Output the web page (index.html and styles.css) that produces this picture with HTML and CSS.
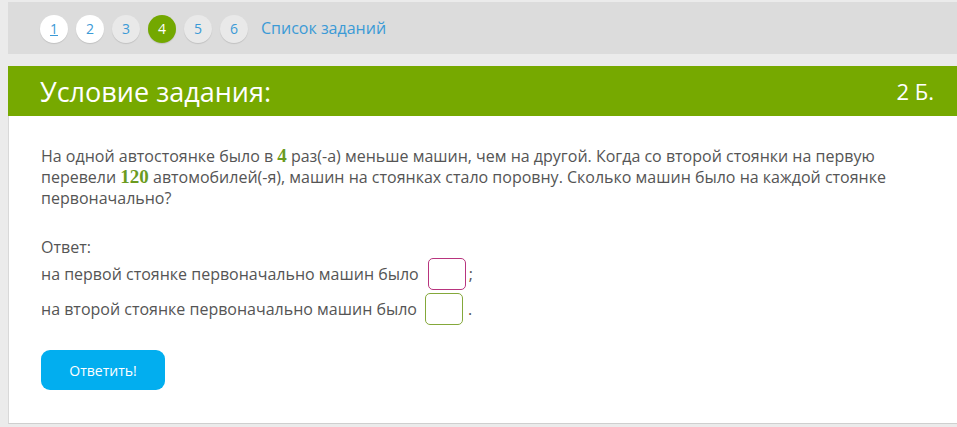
FILE: index.html
```html
<!DOCTYPE html>
<html lang="ru">
<head>
<meta charset="utf-8">
<link rel="stylesheet" href="styles.css">
</head>
<body>
<div class="page">
  <nav class="nav">
    <a class="num num-white num-current">1</a>
    <a class="num num-white">2</a>
    <a class="num">3</a>
    <a class="num num-active">4</a>
    <a class="num">5</a>
    <a class="num">6</a>
    <a class="list-link">Список заданий</a>
  </nav>
  <section class="card">
    <header class="card-head">
      <h1 class="title">Условие задания:</h1>
      <span class="points">2 Б.</span>
    </header>
    <div class="card-body">
      <p class="task">На одной автостоянке было в <span class="mnum">4</span> раз(-а) меньше машин, чем на другой. Когда со второй стоянки на первую перевели <span class="mnum">120</span> автомобилей(-я), машин на стоянках стало поровну. Сколько машин было на каждой стоянке первоначально?</p>
      <div class="answer">
        <div class="answer-label">Ответ:</div>
        <div class="answer-row">на первой стоянке первоначально машин было <span class="box box-pink"></span>;</div>
        <div class="answer-row">на второй стоянке первоначально машин было <span class="box box-green"></span>.</div>
      </div>
      <button class="submit">Ответить!</button>
    </div>
  </section>
</div>
</body>
</html>
```
FILE: styles.css
```css
html, body {
  margin: 0;
  padding: 0;
  background: #ebebeb;
  overflow: hidden;
}
body {
  font-family: "Open Sans", "Liberation Sans", sans-serif;
  color: #555;
}
.page {
  padding: 2px 0 0 8px;
  width: 980px;
}
.nav {
  height: 52px;
  background: #dcdcdc;
  display: flex;
  align-items: center;
  padding-left: 32px;
  gap: 8px;
}
.num {
  width: 28px;
  height: 28px;
  border-radius: 50%;
  background: #e9e9e9;
  color: #3b9ad6;
  font-size: 14px;
  display: flex;
  align-items: center;
  justify-content: center;
  box-shadow: 0 1px 1px rgba(0,0,0,0.12);
  margin-top: 1px;
}
.num-white { background: #fff; }
.num-current { text-decoration: underline; }
.num-active { background: #73a800; color: #fff; }
.list-link {
  color: #3b9ad6;
  font-size: 16px;
  margin-left: 5px;
}
.card {
  margin-top: 12px;
  width: 949px;
  background: #fff;
  border-left: 1px solid #d8d8d8;
  border-bottom: 1px solid #cfcfcf;
}
.card-head {
  height: 50px;
  background: #76a900;
  display: flex;
  align-items: center;
  justify-content: space-between;
  padding: 0 24px 0 32px;
  margin-left: -1px;
  color: #fff;
}
.title {
  margin: 0;
  font-size: 27px;
  font-weight: 400;
}
.points {
  font-size: 22px;
}
.card-body {
  padding: 30px 32px 33px 32px;
}
.task {
  margin: 0;
  font-size: 16px;
  line-height: 21px;
  max-width: 880px;
}
.mnum {
  font-family: "Liberation Serif", "DejaVu Serif", serif;
  font-weight: bold;
  color: #6b9b1f;
  font-size: 19px;
  line-height: 16px;
}
.answer {
  margin-top: 29px;
  font-size: 16px;
}
.answer-label {
  line-height: 18px;
}
.answer-row {
  display: flex;
  align-items: center;
  height: 35px;
}
.box {
  display: inline-block;
  width: 38px;
  height: 32px;
  border-radius: 5px;
  margin: 0 3px 0 9px;
  box-sizing: border-box;
}
.box-pink { border: 1px solid #b8347e; }
.box-green { border: 1px solid #84a83a; margin-left: 8px; margin-right: 5px; }
.submit {
  margin-top: 24px;
  width: 124px;
  height: 40px;
  border: none;
  border-radius: 9px;
  background: #02aeef;
  color: #fff;
  font-family: "Open Sans", "Liberation Sans", sans-serif;
  font-size: 14px;
}
```
